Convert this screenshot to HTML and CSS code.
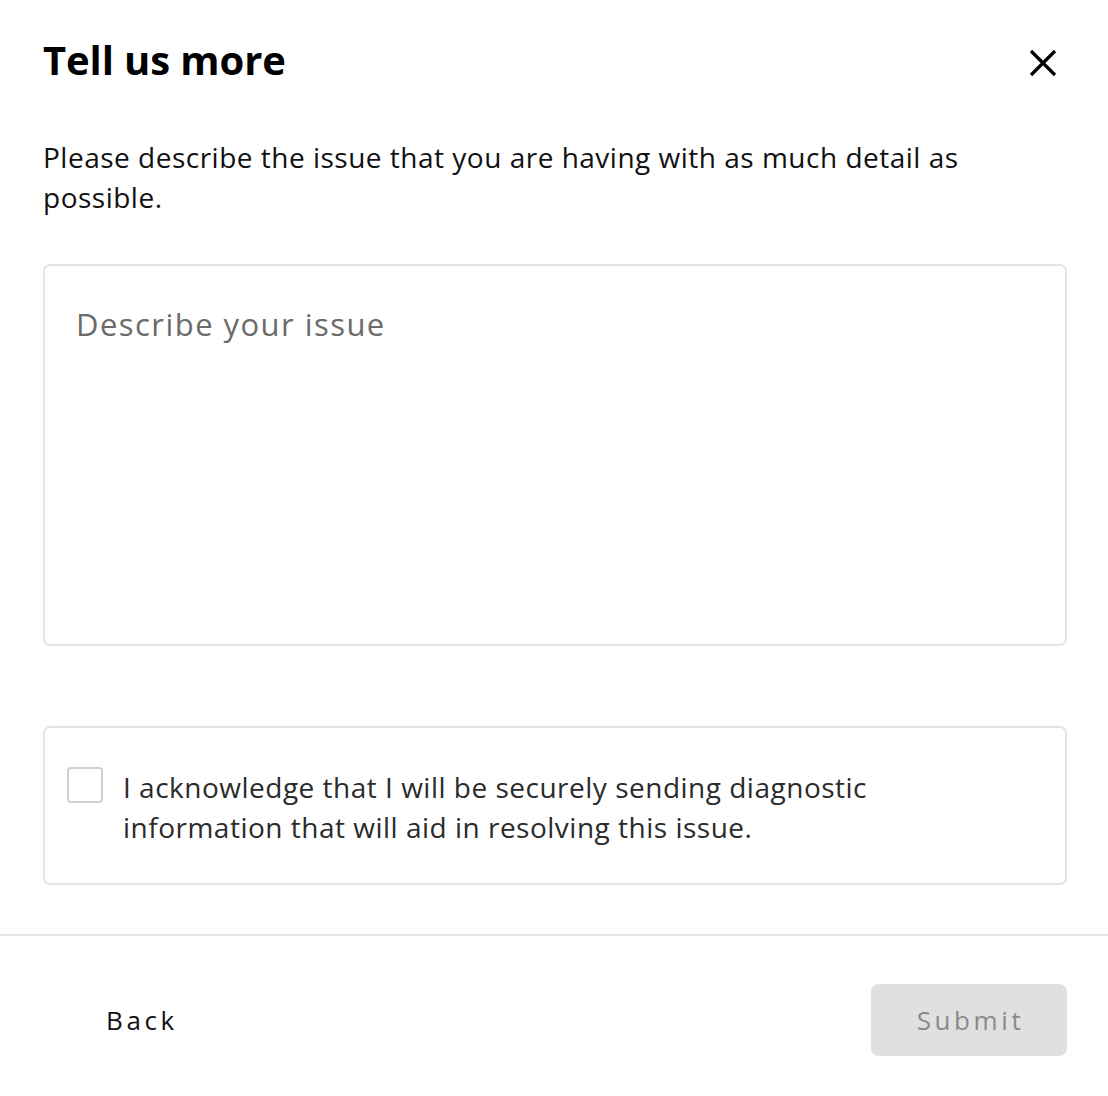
FILE: index.html
```html
<!DOCTYPE html>
<html lang="en">
<head>
<meta charset="utf-8">
<title>Tell us more</title>
<link rel="stylesheet" href="styles.css">
</head>
<body>
<div class="dialog">
  <div class="content">
    <div class="header">
      <h1 class="title">Tell us more</h1>
      <button class="close" aria-label="Close">
        <svg width="30" height="30" viewBox="0 0 30 30"><path d="M3 3 L27 27 M27 3 L3 27" stroke="#000" stroke-width="3.2" fill="none"/></svg>
      </button>
    </div>
    <p class="desc">Please describe the issue that you are having with as much detail as possible.</p>
    <div class="textarea"><span class="placeholder">Describe your issue</span></div>
    <div class="ack">
      <span class="checkbox"></span>
      <span class="ack-text">I acknowledge that I will be securely sending diagnostic information that will aid in resolving this issue.</span>
    </div>
  </div>
  <div class="footer">
    <button class="btn back">Back</button>
    <button class="btn submit">Submit</button>
  </div>
</div>
</body>
</html>
```
FILE: styles.css
```css
html, body {
  margin: 0;
  padding: 0;
  background: #fff;
}
body {
  font-family: "Open Sans", "Liberation Sans", sans-serif;
  color: #111;
}
.dialog {
  width: 1108px;
}
.content {
  padding: 36px 41px 0 43px;
}
.header {
  display: flex;
  align-items: center;
  justify-content: space-between;
  height: 48px;
}
.title {
  margin: 0;
  font-size: 40px;
  line-height: 48px;
  font-weight: 700;
  color: #000;
  letter-spacing: -0.1px;
}
.close {
  border: 0;
  background: none;
  padding: 0;
  width: 30px;
  height: 30px;
  margin-right: 9px;
  margin-top: 6px;
  display: flex;
}
.desc {
  margin: 53px 0 0;
  font-size: 28px;
  line-height: 40px;
  color: #111;
  letter-spacing: 0.5px;
}
.textarea {
  margin-top: 47px;
  height: 382px;
  box-sizing: border-box;
  border: 2px solid #e4e4e4;
  border-radius: 7px;
  padding: 38px 31px;
}
.placeholder {
  display: block;
  font-size: 31px;
  line-height: 40px;
  color: #6b6b6b;
  letter-spacing: 1.45px;
}
.ack {
  margin-top: 80px;
  border: 2px solid #e4e4e4;
  border-radius: 7px;
  padding: 39px 22px 36px 22px;
  display: flex;
  align-items: flex-start;
  gap: 20px;
}
.checkbox {
  flex: none;
  width: 36px;
  height: 36px;
  box-sizing: border-box;
  border: 2px solid #cdd1d6;
  border-radius: 4px;
}
.ack-text {
  font-size: 28px;
  line-height: 40px;
  color: #2b2b2b;
  letter-spacing: 0.5px;
  padding-right: 100px;
}
.footer {
  margin-top: 49px;
  border-top: 2px solid #e6e6e6;
  padding: 48px 41px 0 43px;
  display: flex;
  justify-content: space-between;
  align-items: center;
}
.btn {
  font-family: "Open Sans", "Liberation Sans", sans-serif;
  font-size: 26px;
  letter-spacing: 3.6px;
  height: 72px;
  border: 0;
  border-radius: 8px;
  cursor: pointer;
}
.back {
  background: none;
  color: #111;
  padding: 0 44px 0 63px;
}
.submit {
  background: #e0e0e0;
  color: #8a8a8a;
  width: 196px;
  padding: 0 0 0 3px;
}
```
